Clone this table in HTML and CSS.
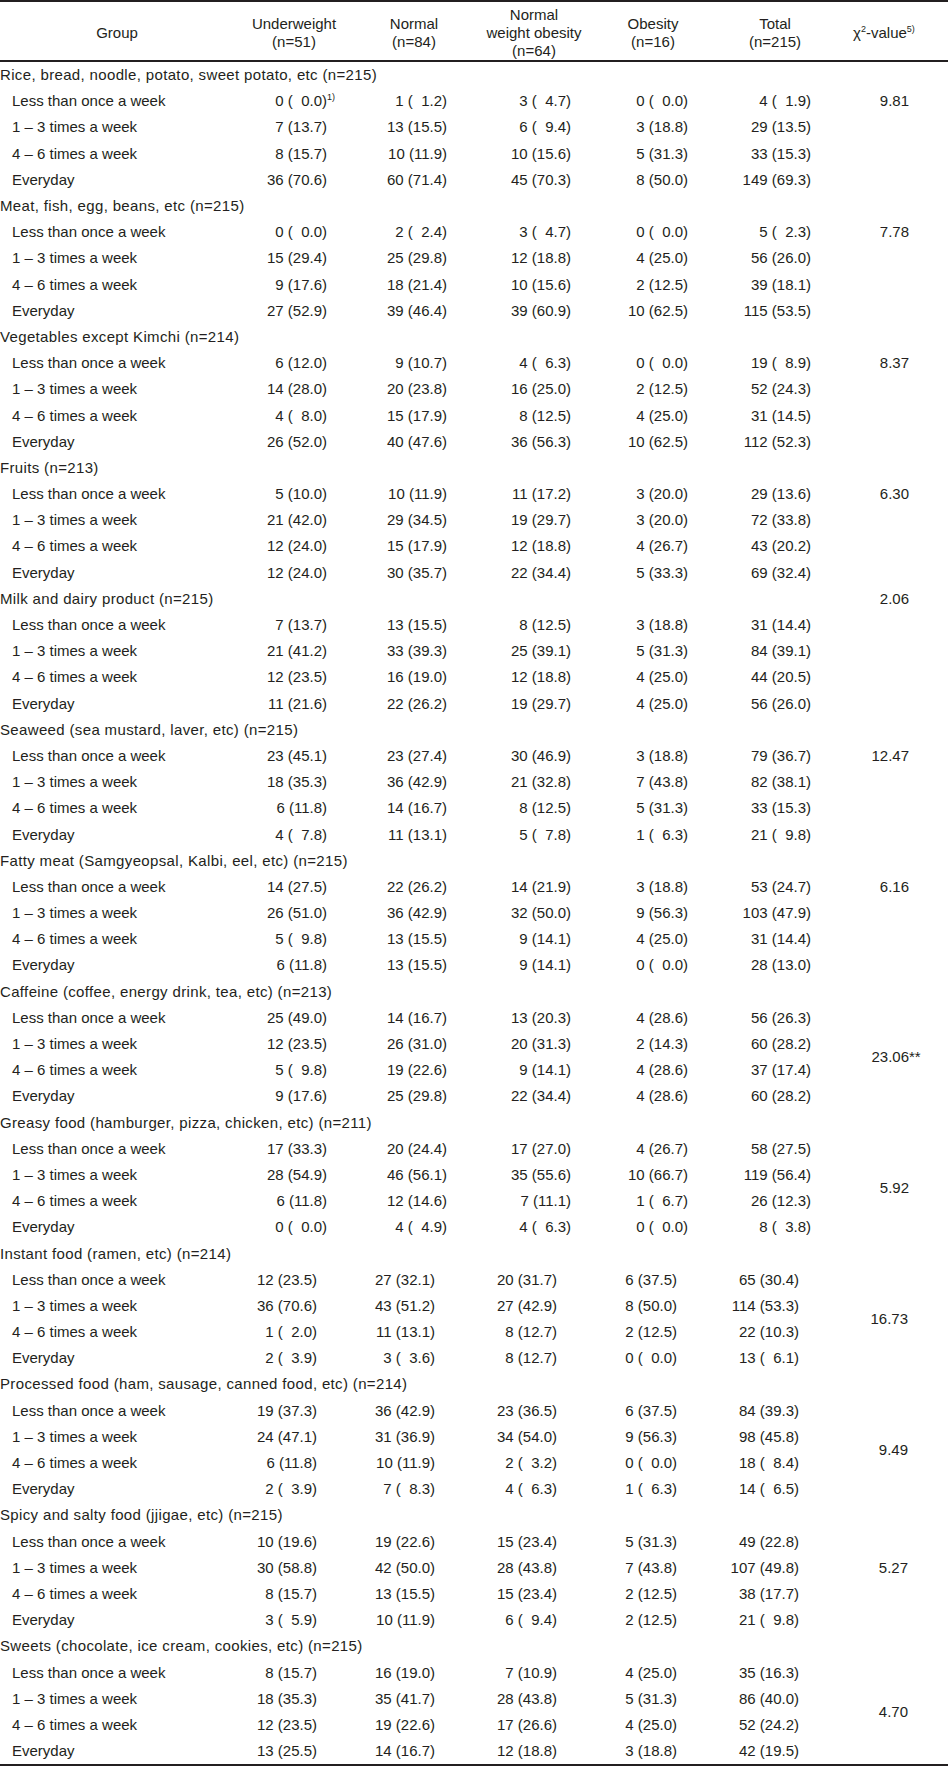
FILE: index.html
```html
<!DOCTYPE html>
<html>
<head>
<meta charset="utf-8">
<link rel="stylesheet" href="styles.css">
</head>
<body>
<table class="t">
<colgroup><col class="c1"><col class="c2"><col class="c3"><col class="c4"><col class="c5"><col class="c6"><col class="c7"></colgroup>
<thead>
<tr><th>Group</th><th>Underweight<br>(n=51)</th><th>Normal<br>(n=84)</th><th>Normal<br>weight obesity<br>(n=64)</th><th>Obesity<br>(n=16)</th><th>Total<br>(n=215)</th><th class="hchi">χ<sup>2</sup>-value<sup class="s5">5)</sup></th></tr>
</thead>
<tbody>
<tr class="cat"><td colspan="6">Rice, bread, noodle, potato, sweet potato, etc (n=215)</td><td class="chi"></td></tr>
<tr><td class="lab">Less than once a week</td><td>0 (  0.0)<span class="fn">1)</span></td><td>1 (  1.2)</td><td>3 (  4.7)</td><td>0 (  0.0)</td><td>4 (  1.9)</td><td class="chi">9.81</td></tr>
<tr><td class="lab">1 – 3 times a week</td><td>7 (13.7)</td><td>13 (15.5)</td><td>6 (  9.4)</td><td>3 (18.8)</td><td>29 (13.5)</td><td class="chi"></td></tr>
<tr><td class="lab">4 – 6 times a week</td><td>8 (15.7)</td><td>10 (11.9)</td><td>10 (15.6)</td><td>5 (31.3)</td><td>33 (15.3)</td><td class="chi"></td></tr>
<tr><td class="lab">Everyday</td><td>36 (70.6)</td><td>60 (71.4)</td><td>45 (70.3)</td><td>8 (50.0)</td><td>149 (69.3)</td><td class="chi"></td></tr>
</tbody>
<tbody>
<tr class="cat"><td colspan="6">Meat, fish, egg, beans, etc (n=215)</td><td class="chi"></td></tr>
<tr><td class="lab">Less than once a week</td><td>0 (  0.0)</td><td>2 (  2.4)</td><td>3 (  4.7)</td><td>0 (  0.0)</td><td>5 (  2.3)</td><td class="chi">7.78</td></tr>
<tr><td class="lab">1 – 3 times a week</td><td>15 (29.4)</td><td>25 (29.8)</td><td>12 (18.8)</td><td>4 (25.0)</td><td>56 (26.0)</td><td class="chi"></td></tr>
<tr><td class="lab">4 – 6 times a week</td><td>9 (17.6)</td><td>18 (21.4)</td><td>10 (15.6)</td><td>2 (12.5)</td><td>39 (18.1)</td><td class="chi"></td></tr>
<tr><td class="lab">Everyday</td><td>27 (52.9)</td><td>39 (46.4)</td><td>39 (60.9)</td><td>10 (62.5)</td><td>115 (53.5)</td><td class="chi"></td></tr>
</tbody>
<tbody>
<tr class="cat"><td colspan="6">Vegetables except Kimchi (n=214)</td><td class="chi"></td></tr>
<tr><td class="lab">Less than once a week</td><td>6 (12.0)</td><td>9 (10.7)</td><td>4 (  6.3)</td><td>0 (  0.0)</td><td>19 (  8.9)</td><td class="chi">8.37</td></tr>
<tr><td class="lab">1 – 3 times a week</td><td>14 (28.0)</td><td>20 (23.8)</td><td>16 (25.0)</td><td>2 (12.5)</td><td>52 (24.3)</td><td class="chi"></td></tr>
<tr><td class="lab">4 – 6 times a week</td><td>4 (  8.0)</td><td>15 (17.9)</td><td>8 (12.5)</td><td>4 (25.0)</td><td>31 (14.5)</td><td class="chi"></td></tr>
<tr><td class="lab">Everyday</td><td>26 (52.0)</td><td>40 (47.6)</td><td>36 (56.3)</td><td>10 (62.5)</td><td>112 (52.3)</td><td class="chi"></td></tr>
</tbody>
<tbody>
<tr class="cat"><td colspan="6">Fruits (n=213)</td><td class="chi"></td></tr>
<tr><td class="lab">Less than once a week</td><td>5 (10.0)</td><td>10 (11.9)</td><td>11 (17.2)</td><td>3 (20.0)</td><td>29 (13.6)</td><td class="chi">6.30</td></tr>
<tr><td class="lab">1 – 3 times a week</td><td>21 (42.0)</td><td>29 (34.5)</td><td>19 (29.7)</td><td>3 (20.0)</td><td>72 (33.8)</td><td class="chi"></td></tr>
<tr><td class="lab">4 – 6 times a week</td><td>12 (24.0)</td><td>15 (17.9)</td><td>12 (18.8)</td><td>4 (26.7)</td><td>43 (20.2)</td><td class="chi"></td></tr>
<tr><td class="lab">Everyday</td><td>12 (24.0)</td><td>30 (35.7)</td><td>22 (34.4)</td><td>5 (33.3)</td><td>69 (32.4)</td><td class="chi"></td></tr>
</tbody>
<tbody>
<tr class="cat"><td colspan="6">Milk and dairy product (n=215)</td><td class="chi">2.06</td></tr>
<tr><td class="lab">Less than once a week</td><td>7 (13.7)</td><td>13 (15.5)</td><td>8 (12.5)</td><td>3 (18.8)</td><td>31 (14.4)</td><td class="chi"></td></tr>
<tr><td class="lab">1 – 3 times a week</td><td>21 (41.2)</td><td>33 (39.3)</td><td>25 (39.1)</td><td>5 (31.3)</td><td>84 (39.1)</td><td class="chi"></td></tr>
<tr><td class="lab">4 – 6 times a week</td><td>12 (23.5)</td><td>16 (19.0)</td><td>12 (18.8)</td><td>4 (25.0)</td><td>44 (20.5)</td><td class="chi"></td></tr>
<tr><td class="lab">Everyday</td><td>11 (21.6)</td><td>22 (26.2)</td><td>19 (29.7)</td><td>4 (25.0)</td><td>56 (26.0)</td><td class="chi"></td></tr>
</tbody>
<tbody>
<tr class="cat"><td colspan="6">Seaweed (sea mustard, laver, etc) (n=215)</td><td class="chi"></td></tr>
<tr><td class="lab">Less than once a week</td><td>23 (45.1)</td><td>23 (27.4)</td><td>30 (46.9)</td><td>3 (18.8)</td><td>79 (36.7)</td><td class="chi">12.47</td></tr>
<tr><td class="lab">1 – 3 times a week</td><td>18 (35.3)</td><td>36 (42.9)</td><td>21 (32.8)</td><td>7 (43.8)</td><td>82 (38.1)</td><td class="chi"></td></tr>
<tr><td class="lab">4 – 6 times a week</td><td>6 (11.8)</td><td>14 (16.7)</td><td>8 (12.5)</td><td>5 (31.3)</td><td>33 (15.3)</td><td class="chi"></td></tr>
<tr><td class="lab">Everyday</td><td>4 (  7.8)</td><td>11 (13.1)</td><td>5 (  7.8)</td><td>1 (  6.3)</td><td>21 (  9.8)</td><td class="chi"></td></tr>
</tbody>
<tbody>
<tr class="cat"><td colspan="6">Fatty meat (Samgyeopsal, Kalbi, eel, etc) (n=215)</td><td class="chi"></td></tr>
<tr><td class="lab">Less than once a week</td><td>14 (27.5)</td><td>22 (26.2)</td><td>14 (21.9)</td><td>3 (18.8)</td><td>53 (24.7)</td><td class="chi">6.16</td></tr>
<tr><td class="lab">1 – 3 times a week</td><td>26 (51.0)</td><td>36 (42.9)</td><td>32 (50.0)</td><td>9 (56.3)</td><td>103 (47.9)</td><td class="chi"></td></tr>
<tr><td class="lab">4 – 6 times a week</td><td>5 (  9.8)</td><td>13 (15.5)</td><td>9 (14.1)</td><td>4 (25.0)</td><td>31 (14.4)</td><td class="chi"></td></tr>
<tr><td class="lab">Everyday</td><td>6 (11.8)</td><td>13 (15.5)</td><td>9 (14.1)</td><td>0 (  0.0)</td><td>28 (13.0)</td><td class="chi"></td></tr>
</tbody>
<tbody>
<tr class="cat"><td colspan="6">Caffeine (coffee, energy drink, tea, etc) (n=213)</td><td class="chi"></td></tr>
<tr><td class="lab">Less than once a week</td><td>25 (49.0)</td><td>14 (16.7)</td><td>13 (20.3)</td><td>4 (28.6)</td><td>56 (26.3)</td><td class="chi" rowspan="4">23.06<span class="ov">**</span></td></tr>
<tr><td class="lab">1 – 3 times a week</td><td>12 (23.5)</td><td>26 (31.0)</td><td>20 (31.3)</td><td>2 (14.3)</td><td>60 (28.2)</td></tr>
<tr><td class="lab">4 – 6 times a week</td><td>5 (  9.8)</td><td>19 (22.6)</td><td>9 (14.1)</td><td>4 (28.6)</td><td>37 (17.4)</td></tr>
<tr><td class="lab">Everyday</td><td>9 (17.6)</td><td>25 (29.8)</td><td>22 (34.4)</td><td>4 (28.6)</td><td>60 (28.2)</td></tr>
</tbody>
<tbody>
<tr class="cat"><td colspan="6">Greasy food (hamburger, pizza, chicken, etc) (n=211)</td><td class="chi"></td></tr>
<tr><td class="lab">Less than once a week</td><td>17 (33.3)</td><td>20 (24.4)</td><td>17 (27.0)</td><td>4 (26.7)</td><td>58 (27.5)</td><td class="chi" rowspan="4">5.92</td></tr>
<tr><td class="lab">1 – 3 times a week</td><td>28 (54.9)</td><td>46 (56.1)</td><td>35 (55.6)</td><td>10 (66.7)</td><td>119 (56.4)</td></tr>
<tr><td class="lab">4 – 6 times a week</td><td>6 (11.8)</td><td>12 (14.6)</td><td>7 (11.1)</td><td>1 (  6.7)</td><td>26 (12.3)</td></tr>
<tr><td class="lab">Everyday</td><td>0 (  0.0)</td><td>4 (  4.9)</td><td>4 (  6.3)</td><td>0 (  0.0)</td><td>8 (  3.8)</td></tr>
</tbody>
<tbody class="lo">
<tr class="cat"><td colspan="6">Instant food (ramen, etc) (n=214)</td><td class="chi"></td></tr>
<tr><td class="lab">Less than once a week</td><td>12 (23.5)</td><td>27 (32.1)</td><td>20 (31.7)</td><td>6 (37.5)</td><td>65 (30.4)</td><td class="chi" rowspan="4">16.73</td></tr>
<tr><td class="lab">1 – 3 times a week</td><td>36 (70.6)</td><td>43 (51.2)</td><td>27 (42.9)</td><td>8 (50.0)</td><td>114 (53.3)</td></tr>
<tr><td class="lab">4 – 6 times a week</td><td>1 (  2.0)</td><td>11 (13.1)</td><td>8 (12.7)</td><td>2 (12.5)</td><td>22 (10.3)</td></tr>
<tr><td class="lab">Everyday</td><td>2 (  3.9)</td><td>3 (  3.6)</td><td>8 (12.7)</td><td>0 (  0.0)</td><td>13 (  6.1)</td></tr>
</tbody>
<tbody class="lo">
<tr class="cat"><td colspan="6">Processed food (ham, sausage, canned food, etc) (n=214)</td><td class="chi"></td></tr>
<tr><td class="lab">Less than once a week</td><td>19 (37.3)</td><td>36 (42.9)</td><td>23 (36.5)</td><td>6 (37.5)</td><td>84 (39.3)</td><td class="chi" rowspan="4">9.49</td></tr>
<tr><td class="lab">1 – 3 times a week</td><td>24 (47.1)</td><td>31 (36.9)</td><td>34 (54.0)</td><td>9 (56.3)</td><td>98 (45.8)</td></tr>
<tr><td class="lab">4 – 6 times a week</td><td>6 (11.8)</td><td>10 (11.9)</td><td>2 (  3.2)</td><td>0 (  0.0)</td><td>18 (  8.4)</td></tr>
<tr><td class="lab">Everyday</td><td>2 (  3.9)</td><td>7 (  8.3)</td><td>4 (  6.3)</td><td>1 (  6.3)</td><td>14 (  6.5)</td></tr>
</tbody>
<tbody class="lo">
<tr class="cat"><td colspan="6">Spicy and salty food (jjigae, etc) (n=215)</td><td class="chi"></td></tr>
<tr><td class="lab">Less than once a week</td><td>10 (19.6)</td><td>19 (22.6)</td><td>15 (23.4)</td><td>5 (31.3)</td><td>49 (22.8)</td><td class="chi"></td></tr>
<tr><td class="lab">1 – 3 times a week</td><td>30 (58.8)</td><td>42 (50.0)</td><td>28 (43.8)</td><td>7 (43.8)</td><td>107 (49.8)</td><td class="chi">5.27</td></tr>
<tr><td class="lab">4 – 6 times a week</td><td>8 (15.7)</td><td>13 (15.5)</td><td>15 (23.4)</td><td>2 (12.5)</td><td>38 (17.7)</td><td class="chi"></td></tr>
<tr><td class="lab">Everyday</td><td>3 (  5.9)</td><td>10 (11.9)</td><td>6 (  9.4)</td><td>2 (12.5)</td><td>21 (  9.8)</td><td class="chi"></td></tr>
</tbody>
<tbody class="lo">
<tr class="cat"><td colspan="6">Sweets (chocolate, ice cream, cookies, etc) (n=215)</td><td class="chi"></td></tr>
<tr><td class="lab">Less than once a week</td><td>8 (15.7)</td><td>16 (19.0)</td><td>7 (10.9)</td><td>4 (25.0)</td><td>35 (16.3)</td><td class="chi" rowspan="4">4.70</td></tr>
<tr><td class="lab">1 – 3 times a week</td><td>18 (35.3)</td><td>35 (41.7)</td><td>28 (43.8)</td><td>5 (31.3)</td><td>86 (40.0)</td></tr>
<tr><td class="lab">4 – 6 times a week</td><td>12 (23.5)</td><td>19 (22.6)</td><td>17 (26.6)</td><td>4 (25.0)</td><td>52 (24.2)</td></tr>
<tr><td class="lab">Everyday</td><td>13 (25.5)</td><td>14 (16.7)</td><td>12 (18.8)</td><td>3 (18.8)</td><td>42 (19.5)</td></tr>
</tbody>
</table>
</body>
</html>
```
FILE: styles.css
```css
html, body {
  margin: 0;
  padding: 0;
  background: #ffffff;
}
body {
  font-family: "Liberation Sans", Arial, sans-serif;
  font-size: 15px;
  color: #231f20;
}
.t {
  width: 948px;
  border-collapse: collapse;
  table-layout: fixed;
  border-bottom: 2px solid #231f20;
}
.c1 { width: 234px; }
.c2 { width: 120px; }
.c3 { width: 120px; }
.c4 { width: 120px; }
.c5 { width: 118px; }
.c6 { width: 126px; }
.c7 { width: 110px; }

.t th {
  font-weight: normal;
  height: 55px;
  line-height: 18px;
  padding: 3px 0 0 0;
  text-align: center;
  vertical-align: middle;
  border-top: 2px solid #231f20;
  border-bottom: 2px solid #231f20;
}
.t th.hchi {
  padding-right: 18px;
}
.t sup {
  font-size: 9px;
  line-height: 0;
  vertical-align: 6px;
}
.t td {
  height: 26.2px;
  padding: 0;
  line-height: 18px;
  white-space: pre;
  text-align: right;
  vertical-align: middle;
}
.t td:nth-child(2) { padding-right: 27px; }
.t td:nth-child(3) { padding-right: 27px; }
.t td:nth-child(4) { padding-right: 23px; }
.t td:nth-child(5) { padding-right: 24px; }
.t td:nth-child(6) { padding-right: 27px; }
.t td.chi { padding-right: 39px; }

.t .lo td:nth-child(2) { padding-right: 37px; }
.t .lo td:nth-child(3) { padding-right: 39px; }
.t .lo td:nth-child(4) { padding-right: 37px; }
.t .lo td:nth-child(5) { padding-right: 35px; }
.t .lo td:nth-child(6) { padding-right: 39px; }
.t .lo td.chi { padding-right: 40px; }

.t .cat td:first-child {
  text-align: left;
  padding-left: 0;
  padding-right: 0;
  letter-spacing: 0.35px;
}
.t td.lab {
  text-align: left;
  padding-left: 12px;
}
.fn {
  display: inline-block;
  width: 0;
  font-size: 9px;
  line-height: 0;
  vertical-align: 6px;
  white-space: nowrap;
}
.ov {
  display: inline-block;
  width: 0;
  white-space: nowrap;
}
```
